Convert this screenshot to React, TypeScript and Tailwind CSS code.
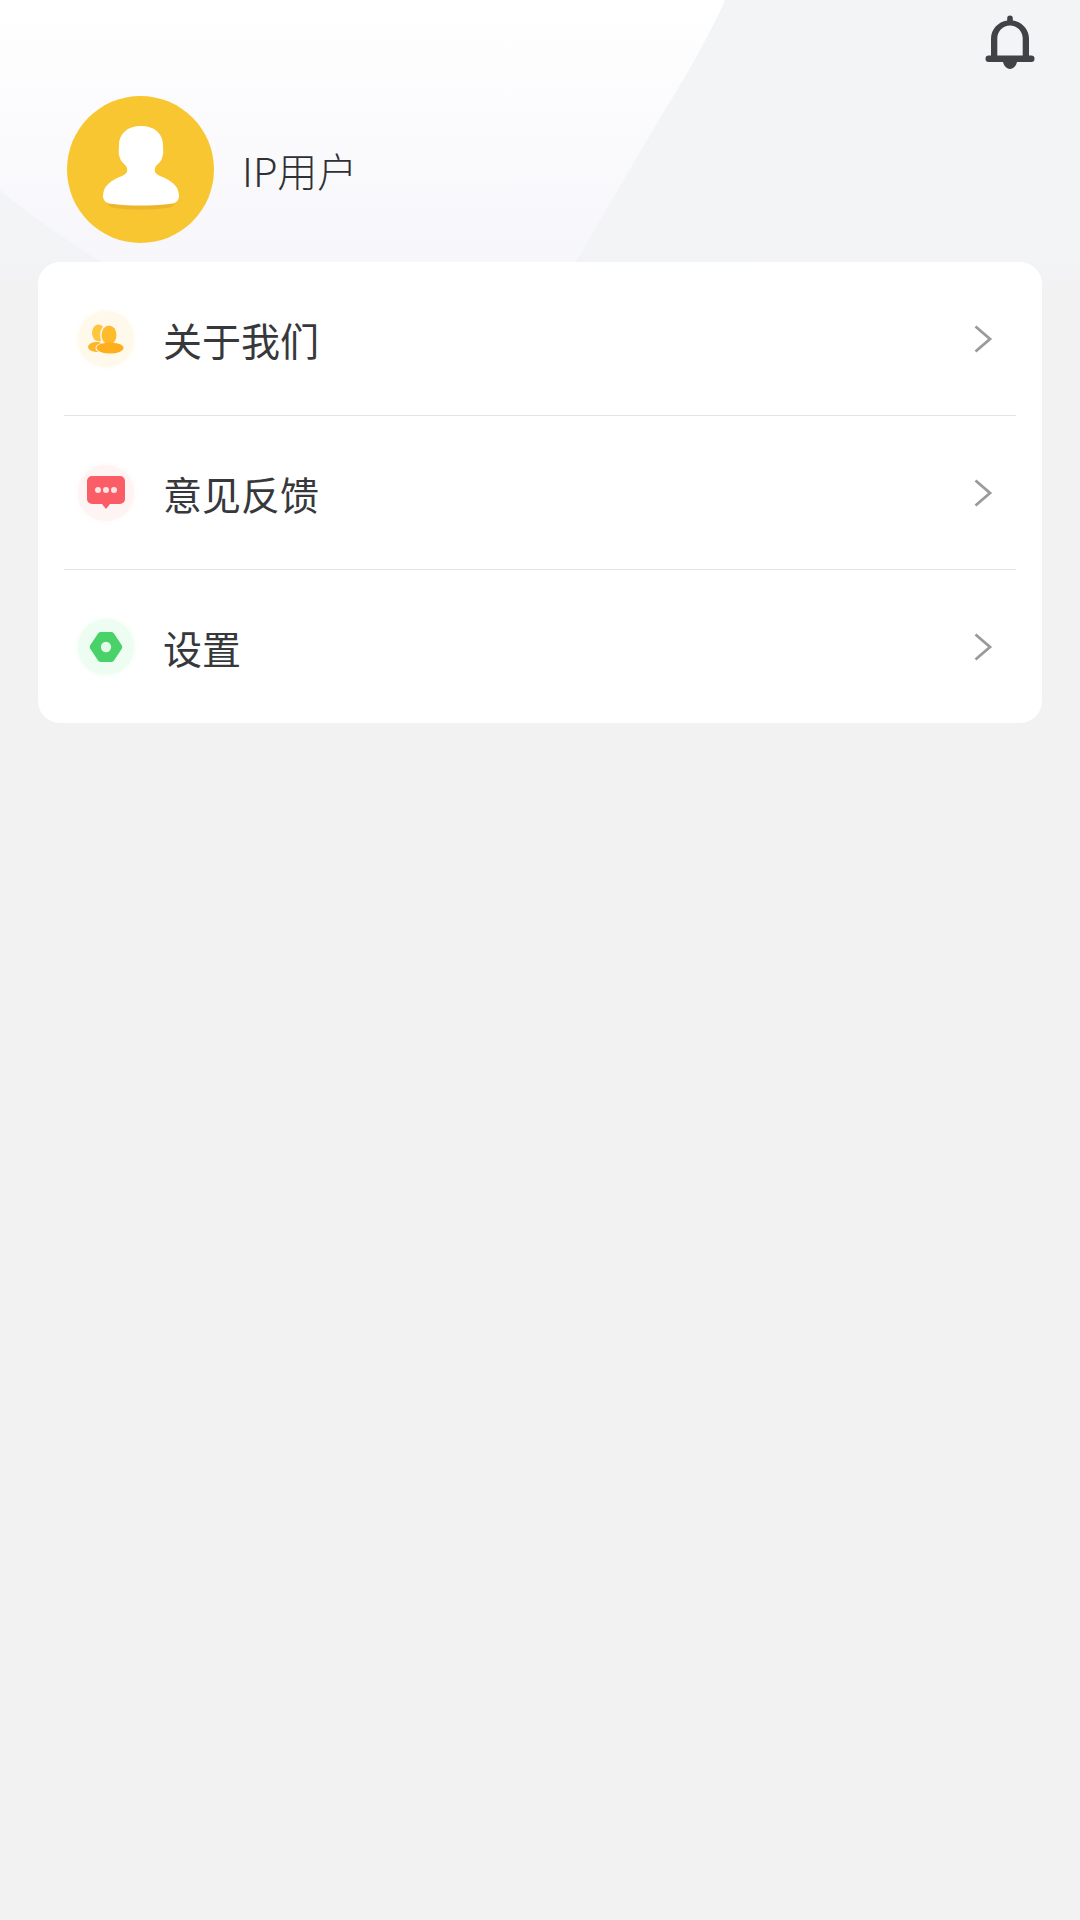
import React from 'react';

const font = { fontFamily: '"Noto Sans CJK SC", "Noto Sans", sans-serif' };

const BellIcon = () => (
    <svg width="50" height="56" viewBox="0 0 50 56" fill="none">
        <path d="M25 1.500a2.800 2.800 0 0 1 2.800 2.800v2.200C37 7.800 44 15.500 44 24.500V43h-6.300V24.500c0-7.200-5.700-13-12.700-13s-12.700 5.800-12.700 13V43H6V24.500C6 15.500 13 7.800 22.200 6.500V4.300A2.800 2.800 0 0 1 25 1.500z" fill="#414245" />
        <rect x="0.500" y="41.500" width="49" height="6.500" rx="3.250" fill="#414245" />
        <path d="M18 47h14c0 4-3.500 8-7 8s-7-4-7-8z" fill="#414245" />
    </svg>
);

const UserIcon = () => (
    <svg width="80" height="88" viewBox="0 0 80 88">
        <path d="M5 74c0 6 4 10 9 10 18 2 34 2 52 0 5 0 9-4 9-10z" fill="#ecb52c" />
        <path d="M40 2c14 0 22 8 22 19 0 5 1 8-1 13-1 5-6 6-7 10-1 4 1 6 5 8 10 4 19 9 19 20 0 5-4 8-10 8-20 2-38 2-56 0-6 0-10-3-10-8 0-11 9-16 19-20 4-2 6-4 5-8-1-4-6-5-7-10-2-5-1-8-1-13C18 10 26 2 40 2z" fill="#ffffff" />
    </svg>
);

const AboutIcon = () => (
    <svg width="36" height="30" viewBox="0 0 36 30">
        <ellipse cx="10.500" cy="9" rx="6.500" ry="8.500" fill="#fdc63e" />
        <ellipse cx="8.500" cy="23" rx="8.500" ry="5" fill="#fbb62a" />
        <ellipse cx="21" cy="11" rx="9" ry="11" fill="#fff9ec" />
        <ellipse cx="22" cy="24" rx="14.500" ry="6.500" fill="#fff9ec" />
        <ellipse cx="21" cy="11" rx="7.500" ry="9.500" fill="#ffbb2c" />
        <ellipse cx="22" cy="24" rx="13.500" ry="5.500" fill="#ffae1c" />
    </svg>
);

const FeedbackIcon = () => (
    <svg width="38" height="34" viewBox="0 0 38 34">
        <path d="M5 0h28a5 5 0 0 1 5 5v18a5 5 0 0 1-5 5H23l-4 5-4-5H5a5 5 0 0 1-5-5V5a5 5 0 0 1 5-5z" fill="#fb5d66" />
        <circle cx="11" cy="14" r="3" fill="#ffe4e4" />
        <circle cx="19" cy="14" r="3" fill="#ffe4e4" />
        <circle cx="27" cy="14" r="3" fill="#ffe4e4" />
    </svg>
);

const SettingIcon = () => (
    <svg width="34" height="30" viewBox="0 0 36 32">
        <path d="M9.500 1.500A3 3 0 0 1 12 0h12a3 3 0 0 1 2.500 1.500l8.500 13a3 3 0 0 1 0 3l-8.500 13A3 3 0 0 1 24 32H12a3 3 0 0 1-2.500-1.500L1 17.500a3 3 0 0 1 0-3z" fill="#49d267" />
        <circle cx="18" cy="16" r="5.500" fill="#e4fbe9" />
    </svg>
);

const ChevronIcon = () => (
    <svg width="20" height="30" viewBox="0 0 20 30" fill="none">
        <path d="M2.500 2.500 17 15 2.500 27.500" stroke="#9a9a9c" strokeWidth="2.800" />
    </svg>
);

const items = [
    { text: '关于我们', tint: 'bg-[#fff9ec] shadow-[0_0_6px_#fff9ec]', icon: <AboutIcon />, row: 'h-[154px] border-b border-[#e4e4e6]' },
    { text: '意见反馈', tint: 'bg-[#fef4f3] shadow-[0_0_6px_#fef4f3]', icon: <FeedbackIcon />, row: 'h-[154px] border-b border-[#e4e4e6]' },
    { text: '设置', tint: 'bg-[#eefdf2] shadow-[0_0_6px_#eefdf2]', icon: <SettingIcon />, row: 'h-[153px]' },
];

export default function App() {
    return (
        <div style={font} className="relative min-h-[1920px] w-[1080px] overflow-hidden bg-[#f2f2f3]">
            {/* Header backdrop */}
            <div className="absolute inset-x-0 top-0 h-[290px] bg-gradient-to-b from-[#f3f4f6] from-85% to-[#f2f2f3]" />
            <svg className="absolute left-0 top-0" width="726" height="290" viewBox="0 0 726 290">
                <defs>
                    <linearGradient id="wash" x1="0" y1="0" x2="0" y2="1">
                        <stop offset="0" stopColor="#ffffff" />
                        <stop offset="1" stopColor="#f6f6fb" />
                    </linearGradient>
                </defs>
                <path d="M0 0H725C712 30 690 70 660 118L565 280H130C80 250 30 215 0 190Z" fill="url(#wash)" />
            </svg>

            <div className="relative flex flex-col">
                <div className="flex justify-end pr-[45px] pt-[14px]">
                    <BellIcon />
                </div>
                <div className="mt-[26px] flex items-center pl-[67px]">
                    <div className="flex h-[147px] w-[147px] items-center justify-center rounded-full bg-[#f8c630] pb-[3px]">
                        <UserIcon />
                    </div>
                    <span className="ml-[28px] text-[40px] font-light leading-none text-[#2f3036]">IP用户</span>
                </div>

                <div className="mx-[38px] mt-[19px] flex flex-col rounded-[22px] bg-white">
                    {items.map((item, index) => (
                        <div key={index} className="px-[26px]">
                            <div className={`flex items-center pl-[14px] pr-[23px] ${item.row}`}>
                                <div className={`flex h-[56px] w-[56px] shrink-0 items-center justify-center rounded-full pr-[1px] ${item.tint}`}>
                                    {item.icon}
                                </div>
                                <span className="ml-[29px] flex-1 pt-[2px] text-[39px] leading-none text-[#37383c]">{item.text}</span>
                                <ChevronIcon />
                            </div>
                        </div>
                    ))}
                </div>
            </div>
        </div>
    );
}
